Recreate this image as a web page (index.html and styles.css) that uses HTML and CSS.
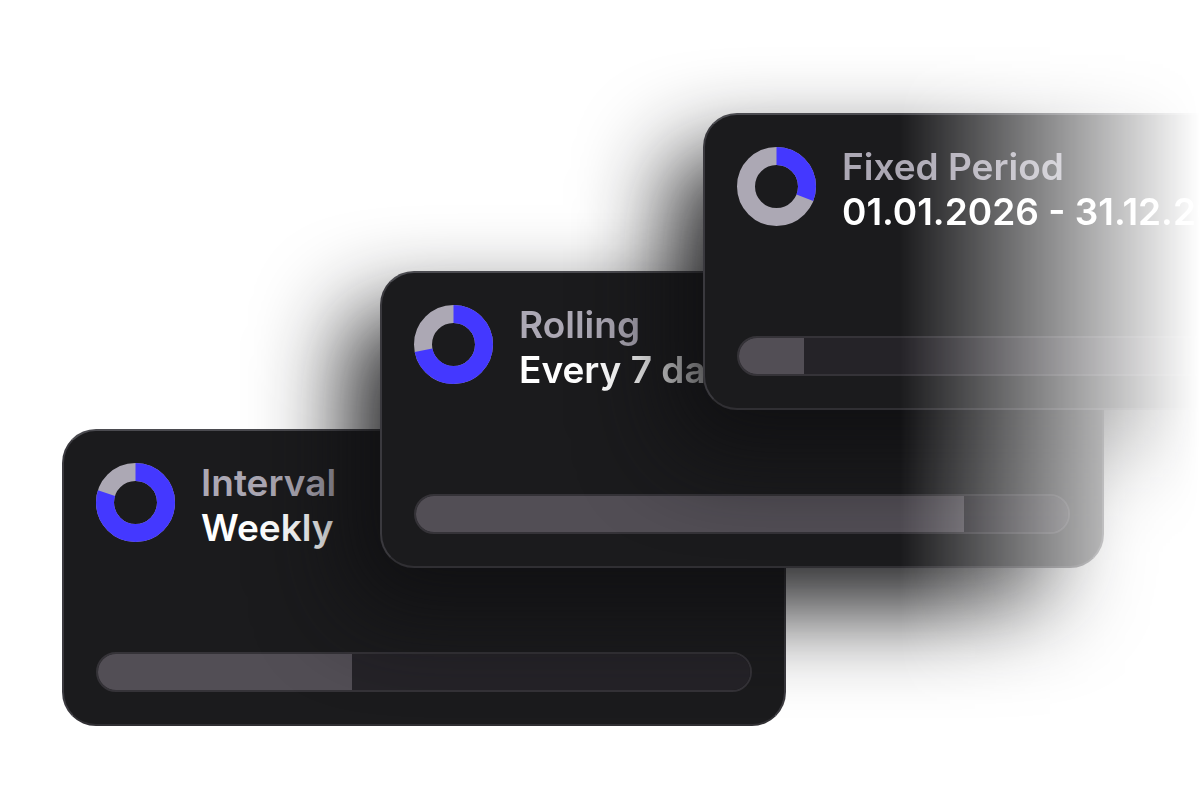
FILE: index.html
```html
<!DOCTYPE html>
<html lang="en">

<head>
    <meta charset="UTF-8">
    <title>Budget Periods</title>
    <link rel="stylesheet" href="styles.css">
</head>

<body>

    <main class="stack">
        <section class="card interval">
            <div class="header">
                <svg class="donut" viewBox="0 0 79 79" aria-hidden="true">
                    <circle class="ring" cx="39.5" cy="39.5" r="30.5"/>
                    <circle class="part" cx="39.5" cy="39.5" r="30.5" pathLength="100" stroke-dasharray="80 100"/>
                </svg>
                <div>
                    <h2 id="intervalTitle">Interval</h2>
                    <p>Weekly</p>
                </div>
            </div>
            <progress value="39" max="100" aria-labelledby="intervalTitle"></progress>
        </section>

        <section class="card rolling">
            <div class="header">
                <svg class="donut" viewBox="0 0 79 79" aria-hidden="true">
                    <circle class="ring" cx="39.5" cy="39.5" r="30.5"/>
                    <circle class="part" cx="39.5" cy="39.5" r="30.5" pathLength="100" stroke-dasharray="72 100"/>
                </svg>
                <div>
                    <h2 id="rollingTitle">Rolling</h2>
                    <p>Every 7 days</p>
                </div>
            </div>
            <progress value="84" max="100" aria-labelledby="rollingTitle"></progress>
        </section>

        <section class="card fixed">
            <div class="header">
                <svg class="donut" viewBox="0 0 79 79" aria-hidden="true">
                    <circle class="ring" cx="39.5" cy="39.5" r="30.5"/>
                    <circle class="part" cx="39.5" cy="39.5" r="30.5" pathLength="100" stroke-dasharray="31 100"/>
                </svg>
                <div>
                    <h2 id="fixedTitle">Fixed Period</h2>
                    <p>01.01.2026 - 31.12.2026</p>
                </div>
            </div>
            <progress value="10" max="100" aria-labelledby="fixedTitle"></progress>
        </section>
    </main>

</body>

</html>
```

FILE: styles.css
```css
* {
    box-sizing: border-box;
}

body {
    margin: 0;
    background-color: #fff;
    font-family: Inter, sans-serif;
}

/* first card is at the bottom, each next one goes above it */
.stack {
    display: flex;
    flex-direction: column-reverse;
    justify-content: flex-end;
    align-items: flex-start;
    min-height: 100vh;
    padding-top: 113px;
    overflow: hidden;
    -webkit-mask-image: linear-gradient(to right, #000 75%, transparent 100%);
    mask-image: linear-gradient(to right, #000 75%, transparent 100%);
}

.card {
    display: flex;
    flex-direction: column;
    justify-content: space-between;
    flex-shrink: 0;
    position: relative;
    width: 724px;
    min-height: 297px;
    padding: 32px;
    border: 2px solid #3a393e;
    border-top-color: #4b4b50;
    border-bottom-color: #302f33;
    border-radius: 34px;
    background-color: #1b1b1d;
    box-shadow: -32px 42px 90px rgba(15, 15, 17, 0.92);
}

.interval {
    margin-left: 62px;
    margin-top: -139px;
    box-shadow: none;
}

.rolling {
    margin-left: 380px;
    margin-top: -139px;
}

.fixed {
    margin-left: 703px;
}

.header {
    display: flex;
    align-items: flex-start;
    gap: 26px;
}

/* text starts a bit above the donut */
.header div {
    margin-top: -3px;
}

.donut {
    width: 79px;
    height: 79px;
    flex-shrink: 0;
    transform: rotate(-90deg);
}

.donut circle {
    fill: none;
    stroke-width: 18;
}

.ring {
    stroke: #aca8b4;
}

.part {
    stroke: #4438ff;
}

h2,
p {
    margin: 0;
    font-size: 37px;
    line-height: 45px;
    font-weight: 600;
    white-space: nowrap;
}

h2 {
    color: #aca8b4;
}

p {
    color: #fff;
}

progress {
    display: block;
    -webkit-appearance: none;
    appearance: none;
    width: 100%;
    height: 40px;
    border: 2px solid #353338;
    border-radius: 20px;
    background-color: #252328;
    overflow: hidden;
}

progress::-webkit-progress-bar {
    background-color: #252328;
}

progress::-webkit-progress-value {
    background-color: #524e55;
}
```
